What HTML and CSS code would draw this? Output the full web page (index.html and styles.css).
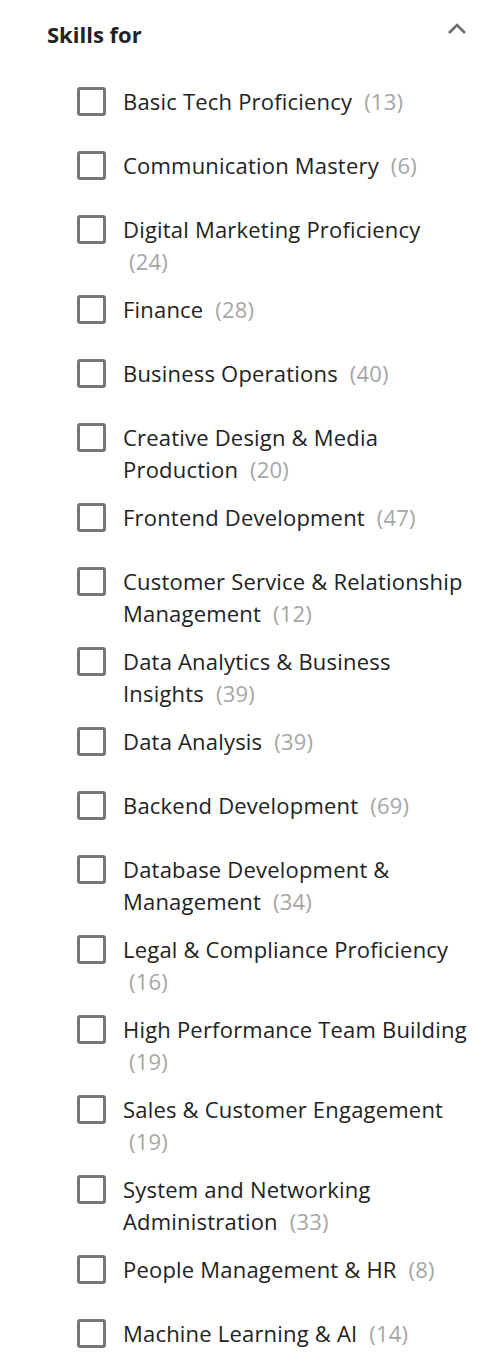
FILE: index.html
```html
<!DOCTYPE html>
<html lang="en">
<head>
  <meta charset="UTF-8">
  <meta name="viewport" content="width=device-width, initial-scale=1.0">
  <title>Skills filter</title>
  <link rel="stylesheet" href="styles.css">
</head>
<body>
  <section class="filter">
    <div class="filter-head">
      <h2>Skills for</h2>
      <svg class="chevron" width="20" height="12" viewBox="0 0 20 12" aria-hidden="true">
        <path d="M2 10 L10 2 L18 10" fill="none" stroke="#6b6b6b" stroke-width="2.6"/>
      </svg>
    </div>

    <ul class="options">
      <li><label><input type="checkbox"><span class="name">Basic Tech Proficiency <span class="count">(13)</span></span></label></li>
      <li><label><input type="checkbox"><span class="name">Communication Mastery <span class="count">(6)</span></span></label></li>
      <li><label><input type="checkbox"><span class="name">Digital Marketing Proficiency <span class="count">(24)</span></span></label></li>
      <li><label><input type="checkbox"><span class="name">Finance <span class="count">(28)</span></span></label></li>
      <li><label><input type="checkbox"><span class="name">Business Operations <span class="count">(40)</span></span></label></li>
      <li><label><input type="checkbox"><span class="name">Creative Design &amp; Media Production <span class="count">(20)</span></span></label></li>
      <li><label><input type="checkbox"><span class="name">Frontend Development <span class="count">(47)</span></span></label></li>
      <li><label><input type="checkbox"><span class="name">Customer Service &amp; Relationship Management <span class="count">(12)</span></span></label></li>
      <li><label><input type="checkbox"><span class="name">Data Analytics &amp; Business Insights <span class="count">(39)</span></span></label></li>
      <li><label><input type="checkbox"><span class="name">Data Analysis <span class="count">(39)</span></span></label></li>
      <li><label><input type="checkbox"><span class="name">Backend Development <span class="count">(69)</span></span></label></li>
      <li><label><input type="checkbox"><span class="name">Database Development &amp; Management <span class="count">(34)</span></span></label></li>
      <li><label><input type="checkbox"><span class="name">Legal &amp; Compliance Proficiency <span class="count">(16)</span></span></label></li>
      <li><label><input type="checkbox"><span class="name">High Performance Team Building <span class="count">(19)</span></span></label></li>
      <li><label><input type="checkbox"><span class="name">Sales &amp; Customer Engagement <span class="count">(19)</span></span></label></li>
      <li><label><input type="checkbox"><span class="name">System and Networking Administration <span class="count">(33)</span></span></label></li>
      <li><label><input type="checkbox"><span class="name">People Management &amp; HR <span class="count">(8)</span></span></label></li>
      <li><label><input type="checkbox"><span class="name">Machine Learning &amp; AI <span class="count">(14)</span></span></label></li>
    </ul>
  </section>
</body>
</html>
```

FILE: styles.css
```css
body {
  font-family: 'Open Sans', sans-serif;
  background: #ffffff;
  color: #222222;
  margin: 0;
}

.filter {
  padding: 14px 24px 0 47px;
}

.filter-head {
  display: flex;
  justify-content: space-between;
  align-items: center;
  height: 40px;
}

.filter-head h2 {
  margin: 0;
  font-size: 22px;
  font-weight: 700;
  color: #222222;
}

.chevron {
  margin: 0 1px 11px 0;
}

.options {
  list-style: none;
  margin: 31px 0 0;
  padding: 0 0 0 30px;
  display: flex;
  flex-direction: column;
  gap: 16px;
}

.options label {
  display: flex;
  align-items: flex-start;
  min-height: 48px;
  cursor: pointer;
}

.options input[type="checkbox"] {
  appearance: none;
  -webkit-appearance: none;
  width: 29px;
  height: 29px;
  margin: 2px 17px 0 0;
  border: 3px solid #777777;
  border-radius: 3px;
  box-sizing: border-box;
  flex-shrink: 0;
}

.name {
  font-size: 22px;
  line-height: 32px;
  letter-spacing: 0.2px;
}

.count {
  color: #a6a6a6;
  margin-left: 6px;
}
```
